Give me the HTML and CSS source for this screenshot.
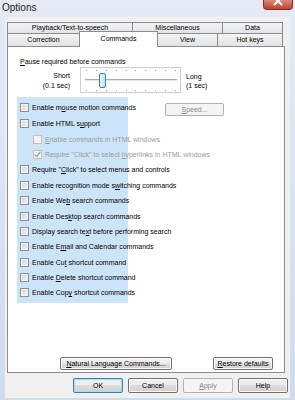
FILE: index.html
```html
<!DOCTYPE html>
<html lang="en">
<head>
    <meta charset="UTF-8">
    <title>Options</title>
    <link rel="stylesheet" href="styles.css">
</head>
<body>

<div class="window">
    <div class="titlebar">
        <span class="title">Options</span>
        <span class="close">
            <svg width="28" height="9" viewBox="0 0 28 9">
                <path d="M10 -3 L18 5 M18 -3 L10 5" stroke="#fff" stroke-width="2" fill="none"/>
            </svg>
        </span>
    </div>

    <div class="client">
        <!-- Tabs, two rows -->
        <div class="tabs">
            <div class="tab-row back">
                <div class="tab w-playback">Playback/Text-to-speech</div>
                <div class="tab w-misc">Miscellaneous</div>
                <div class="tab w-data">Data</div>
            </div>
            <div class="tab-row front">
                <div class="tab w-correction">Correction</div>
                <div class="tab active w-commands">Commands</div>
                <div class="tab w-view">View</div>
                <div class="tab w-hotkeys">Hot keys</div>
            </div>
        </div>

        <div class="panel">
            <div class="pause-label"><u>P</u>ause required before commands</div>

            <div class="slider-row">
                <div class="slider-end left">Short<br>(0.1 sec)</div>
                <div class="slider">
                    <div class="ticks">
                        <i></i><i></i><i></i><i></i><i></i><i></i><i></i><i></i><i></i><i></i>
                    </div>
                    <div class="track"></div>
                    <div class="ticks bottom">
                        <i></i><i></i><i></i><i></i><i></i><i></i><i></i><i></i><i></i><i></i>
                    </div>
                    <div class="thumb"></div>
                </div>
                <div class="slider-end">Long<br>(1 sec)</div>
            </div>

            <div class="options">
                <div class="highlight"></div>

                <div class="opt first">
                    <span class="box"></span>
                    <span>Enable m<u>o</u>use motion commands</span>
                    <button class="btn disabled speed"><u>S</u>peed...</button>
                </div>
                <div class="opt">
                    <span class="box"></span>
                    <span>Enable HTML s<u>u</u>pport</span>
                </div>
                <div class="opt sub disabled">
                    <span class="box"></span>
                    <span><u>E</u>nable commands in HTML windows</span>
                </div>
                <div class="opt sub disabled">
                    <span class="box">
                        <svg width="7" height="7" viewBox="0 0 7 7">
                            <path d="M0.8 3.6 L2.8 5.6 L6.2 1" stroke="#9c9c9c" stroke-width="1.3" fill="none"/>
                        </svg>
                    </span>
                    <span>Require "Click" to select <u>h</u>yperlinks in HTML windows</span>
                </div>
                <div class="opt">
                    <span class="box"></span>
                    <span>Require "<u>C</u>lick" to select menus and controls</span>
                </div>
                <div class="opt">
                    <span class="box"></span>
                    <span>Enable recognition mode s<u>w</u>itching commands</span>
                </div>
                <div class="opt">
                    <span class="box"></span>
                    <span>Enable We<u>b</u> search commands</span>
                </div>
                <div class="opt">
                    <span class="box"></span>
                    <span>Enable Des<u>k</u>top search commands</span>
                </div>
                <div class="opt">
                    <span class="box"></span>
                    <span>Display search te<u>x</u>t before performing search</span>
                </div>
                <div class="opt">
                    <span class="box"></span>
                    <span>Enable E<u>m</u>ail and Calendar commands</span>
                </div>
                <div class="opt">
                    <span class="box"></span>
                    <span>Enable Cu<u>t</u> shortcut command</span>
                </div>
                <div class="opt">
                    <span class="box"></span>
                    <span>Enable <u>D</u>elete shortcut command</span>
                </div>
                <div class="opt">
                    <span class="box"></span>
                    <span>Enable Cop<u>y</u> shortcut commands</span>
                </div>
            </div>

            <div class="panel-buttons">
                <button class="btn nlc"><u>N</u>atural Language Commands...</button>
                <button class="btn restore"><u>R</u>estore defaults</button>
            </div>
        </div>

        <div class="dialog-buttons">
            <button class="btn big default">OK</button>
            <button class="btn big">Cancel</button>
            <button class="btn big disabled"><u>A</u>pply</button>
            <button class="btn big">Help</button>
        </div>
    </div>
</div>

</body>
</html>
```

FILE: styles.css
```css
body {
    margin: 0;
    font-family: "Liberation Sans", Arial, sans-serif;
    font-size: 7px;
    color: #000;
}
.window {
    width: 295px;
    height: 400px;
    background: linear-gradient(#e4ebf4, #cfdcec);
    display: flex;
    flex-direction: column;
}
.titlebar {
    height: 17px;
    display: flex;
    justify-content: space-between;
    align-items: flex-start;
    padding-left: 2px;
}
.title {
    font-size: 10px;
    line-height: 15px;
    color: #1e1e1e;
}
.close {
    width: 28px;
    height: 9px;
    margin-right: 2px;
    background: linear-gradient(#d98a7e, #c23f2e);
    border: 1px solid #8a2f25;
    border-top: none;
    border-radius: 0 0 4px 4px;
    display: flex;
}
.client {
    flex: 1;
    margin: 0 5px 2px 5px;
    padding: 5px 2px 0 2px;
    background: #f0f0f0;
    display: flex;
    flex-direction: column;
}

/* tabs */
.tab-row {
    display: flex;
}
.tab {
    box-sizing: border-box;
    border: 1px solid #898c95;
    border-bottom: none;
    background: linear-gradient(#f4f4f4, #e3e3e3);
    text-align: center;
    margin-left: -1px;
    white-space: nowrap;
}
.tab:first-child {
    margin-left: 0;
}
.back .tab {
    height: 11px;
    line-height: 10px;
}
.front .tab {
    height: 13px;
    line-height: 12px;
}
.front .tab.active {
    height: 16px;
    margin-top: -2px;
    margin-bottom: -1px;
    line-height: 14px;
    background: #fff;
    position: relative;
    z-index: 1;
}
.w-playback { width: 126px; }
.w-misc { width: 91px; }
.w-data { width: 61px; }
.w-correction { width: 73px; }
.w-commands { width: 79px; }
.w-view { width: 61px; }
.w-hotkeys { width: 66px; }

/* panel */
.panel {
    box-sizing: border-box;
    width: 278px;
    height: 327px;
    border: 1px solid #898c95;
    background: #fff;
    padding: 10px 0 2px 12px;
    display: flex;
    flex-direction: column;
}
.pause-label {
    line-height: 9px;
}
.slider-row {
    display: flex;
    margin-top: 1px;
    height: 26px;
}
.slider-end {
    line-height: 9px;
    padding-top: 5px;
    margin-left: 5px;
}
.slider-end.left {
    width: 50px;
    margin-left: 0;
    text-align: right;
    line-height: 10px;
    padding-top: 4px;
}
.slider {
    box-sizing: border-box;
    width: 101px;
    height: 26px;
    margin-left: 10px;
    border: 1px solid #cfcfcf;
    padding: 2px 4px 0 5px;
    position: relative;
}
.ticks {
    display: flex;
    justify-content: space-between;
    height: 1px;
}
.ticks i {
    width: 1px;
    height: 1px;
    background: #9a9a9a;
}
.ticks.bottom {
    margin-top: 9px;
}
.track {
    margin: 8px -1px 0 -1px;
    height: 1px;
    border-bottom: 1px solid #e6e6e6;
    background: #a9a9a9;
}
.thumb {
    position: absolute;
    left: 18px;
    top: 5px;
    width: 7px;
    height: 15px;
    box-sizing: border-box;
    border: 1px solid #3c7fb1;
    border-radius: 2px;
    background: linear-gradient(90deg, #eaf6fd, #bfe3f8);
}

/* check boxes */
.options {
    margin-top: 6px;
    position: relative;
    z-index: 0;
}
.highlight {
    position: absolute;
    left: -3px;
    top: -2px;
    width: 111px;
    height: 206px;
    background: #cce4f7;
    z-index: -1;
}
.opt {
    display: flex;
    align-items: center;
    height: 15.4px;
    white-space: nowrap;
}
.opt.first {
    height: 17px;
}
.opt.sub {
    margin-left: 13px;
}
.box {
    box-sizing: border-box;
    width: 9px;
    height: 9px;
    margin-right: 3px;
    border: 1px solid #8e8f8f;
    background: linear-gradient(135deg, #d3d3d3, #f6f6f6);
    box-shadow: inset 0 0 0 1px #f2f2f2;
    display: flex;
    flex-shrink: 0;
}
.opt.disabled {
    color: #9c9c9c;
}
.opt.disabled .box {
    border-color: #c2c2c2;
    background: #f4f4f4;
    box-shadow: none;
}

/* buttons */
.btn {
    box-sizing: border-box;
    height: 13px;
    padding: 0;
    border: 1px solid #707070;
    border-radius: 2px;
    background: linear-gradient(#f2f2f2 0, #ebebeb 50%, #dddddd 50%, #cfcfcf 100%);
    box-shadow: inset 0 0 0 1px #fbfbfb;
    font-family: inherit;
    font-size: 7px;
    line-height: 11px;
    color: #000;
    text-align: center;
}
.btn.disabled {
    border-color: #adb2b5;
    background: #f4f4f4;
    box-shadow: none;
    color: #8a8a8a;
}
.speed {
    width: 59px;
    margin-left: auto;
    margin-right: 60px;
    align-self: flex-end;
}
.panel-buttons {
    margin-top: auto;
    display: flex;
    justify-content: space-between;
    padding: 0 11px 0 40px;
}
.nlc { width: 112px; }
.restore { width: 60px; }
.dialog-buttons {
    display: flex;
    justify-content: flex-end;
    gap: 5px;
    margin-top: 5px;
}
.btn.big {
    width: 50px;
    height: 15px;
    line-height: 13px;
}
.btn.default {
    border-color: #3c7fb1;
    box-shadow: inset 0 0 0 1px #a9ddf5;
}
```
